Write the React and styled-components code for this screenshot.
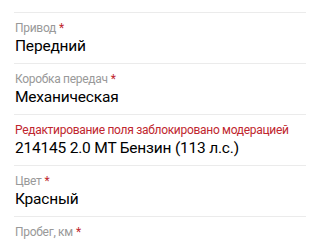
import React from 'react';
import styled, { createGlobalStyle } from 'styled-components';

const Global = createGlobalStyle`
  html, body { margin: 0; padding: 0; background: #fff; }
  body { font-family: Roboto, "Noto Sans", sans-serif; }
`;

const Form = styled.div`
  padding: 12px 14px 0;
  display: flex;
  flex-direction: column;
`;

const Field = styled.div`
  border-top: 1px solid #ebebeb;
  padding: 8px 1px 6px;
  display: flex;
  flex-direction: column;
`;

const Label = styled.div`
  font-size: 12px;
  line-height: 15px;
  letter-spacing: -0.3px;
  white-space: nowrap;
  color: ${(p) => (p.$error ? '#c0262e' : '#999')};
`;

const Star = styled.span`
  color: #c0262e;
  margin-left: 3px;
`;

const Value = styled.div`
  font-size: 15.5px;
  line-height: 21px;
  letter-spacing: -0.2px;
  color: #000;
`;

const fields = [
  { label: 'Привод', value: 'Передний', required: true },
  { label: 'Коробка передач', value: 'Механическая', required: true },
  { label: 'Редактирование поля заблокировано модерацией', value: '214145 2.0 MT Бензин (113 л.с.)', error: true },
  { label: 'Цвет', value: 'Красный', required: true },
  { label: 'Пробег, км', value: '', required: true },
];

export default function App() {
  return (
    <>
      <Global />
      <Form>
        {fields.map((f) => (
          <Field key={f.label}>
            <Label $error={f.error}>
              {f.label}
              {f.required && <Star>*</Star>}
            </Label>
            {f.value && <Value>{f.value}</Value>}
          </Field>
        ))}
      </Form>
    </>
  );
}
